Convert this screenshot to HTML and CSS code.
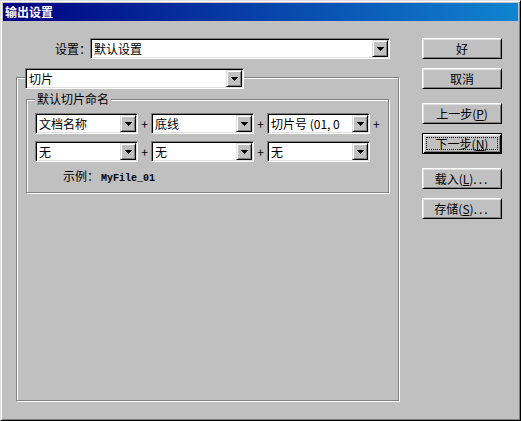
FILE: index.html
```html
<!DOCTYPE html>
<html lang="zh-CN">
<head>
    <meta charset="UTF-8">
    <title>输出设置</title>
    <link rel="stylesheet" href="styles.css">
</head>
<body>

<div class="window">
    <div class="titlebar">输出设置</div>

    <div class="dialog">
        <div class="main">
            <!-- 设置 -->
            <div class="setting-row">
                <span class="setting-label">设置：</span>
                <div class="combo combo-wide">
                    <span class="combo-text">默认设置</span>
                    <span class="combo-btn"><svg width="7" height="4" viewBox="0 0 7 4"><path d="M0 0h7v1H0zM1 1h5v1H1zM2 2h3v1H2zM3 3h1v1H3z"/></svg></span>
                </div>
            </div>

            <!-- 切片 -->
            <div class="group">
                <div class="combo combo-slice">
                    <span class="combo-text">切片</span>
                    <span class="combo-btn"><svg width="7" height="4" viewBox="0 0 7 4"><path d="M0 0h7v1H0zM1 1h5v1H1zM2 2h3v1H2zM3 3h1v1H3z"/></svg></span>
                </div>

                <div class="subgroup">
                    <div class="subgroup-title">默认切片命名</div>

                    <div class="name-row">
                        <div class="combo">
                            <span class="combo-text">文档名称</span>
                            <span class="combo-btn"><svg width="7" height="4" viewBox="0 0 7 4"><path d="M0 0h7v1H0zM1 1h5v1H1zM2 2h3v1H2zM3 3h1v1H3z"/></svg></span>
                        </div>
                        <span class="plus">+</span>
                        <div class="combo">
                            <span class="combo-text">底线</span>
                            <span class="combo-btn"><svg width="7" height="4" viewBox="0 0 7 4"><path d="M0 0h7v1H0zM1 1h5v1H1zM2 2h3v1H2zM3 3h1v1H3z"/></svg></span>
                        </div>
                        <span class="plus">+</span>
                        <div class="combo">
                            <span class="combo-text">切片号 (01, 0</span>
                            <span class="combo-btn"><svg width="7" height="4" viewBox="0 0 7 4"><path d="M0 0h7v1H0zM1 1h5v1H1zM2 2h3v1H2zM3 3h1v1H3z"/></svg></span>
                        </div>
                        <span class="plus plus-end">+</span>
                    </div>

                    <div class="name-row">
                        <div class="combo">
                            <span class="combo-text">无</span>
                            <span class="combo-btn"><svg width="7" height="4" viewBox="0 0 7 4"><path d="M0 0h7v1H0zM1 1h5v1H1zM2 2h3v1H2zM3 3h1v1H3z"/></svg></span>
                        </div>
                        <span class="plus">+</span>
                        <div class="combo">
                            <span class="combo-text">无</span>
                            <span class="combo-btn"><svg width="7" height="4" viewBox="0 0 7 4"><path d="M0 0h7v1H0zM1 1h5v1H1zM2 2h3v1H2zM3 3h1v1H3z"/></svg></span>
                        </div>
                        <span class="plus">+</span>
                        <div class="combo">
                            <span class="combo-text">无</span>
                            <span class="combo-btn"><svg width="7" height="4" viewBox="0 0 7 4"><path d="M0 0h7v1H0zM1 1h5v1H1zM2 2h3v1H2zM3 3h1v1H3z"/></svg></span>
                        </div>
                    </div>

                    <div class="example">
                        <span>示例：</span><span class="example-value">MyFile_01</span>
                    </div>
                </div>
            </div>
        </div>

        <!-- 按钮 -->
        <div class="actions">
            <button class="btn">好</button>
            <button class="btn">取消</button>
            <button class="btn btn-sep">上一步(<u>P</u>)</button>
            <button class="btn btn-default"><span class="focus-ring">下一步(<u>N</u>)</span></button>
            <button class="btn btn-sep">载入(<u>L</u>)<span class="dots">...</span></button>
            <button class="btn">存储(<u>S</u>)<span class="dots">...</span></button>
        </div>
    </div>
</div>

</body>
</html>
```

FILE: styles.css
```css
body {
    margin: 0;
    font-family: "Noto Sans CJK SC", sans-serif;
    font-size: 12px;
    color: #000;
}
.window {
    width: 521px;
    height: 421px;
    box-sizing: border-box;
    background: #c0c0c0;
    border: 1px solid;
    border-color: #dfdfdf #000 #000 #dfdfdf;
    box-shadow: inset 1px 1px #fff, inset -1px -1px #808080;
    padding: 2px;
}
.titlebar {
    height: 18px;
    line-height: 18px;
    padding-left: 2px;
    background: linear-gradient(to right, #000080, #1084d0);
    color: #fff;
    font-weight: bold;
}
.dialog {
    display: flex;
    padding: 17px 0 0 13px;
}
.main {
    width: 383px;
}
.setting-row {
    display: flex;
    align-items: center;
    height: 21px;
    padding-left: 39px;
}
.setting-label {
    width: 35px;
    white-space: nowrap;
}

/* combo box */
.combo {
    display: flex;
    flex-shrink: 0;
    box-sizing: border-box;
    width: 103px;
    height: 21px;
    padding: 1px;
    background: #fff;
    border: 1px solid;
    border-color: #808080 #fff #fff #808080;
    box-shadow: inset 1px 1px #000, inset -1px -1px #dfdfdf;
}
.combo-wide {
    width: 300px;
}
.combo-slice {
    width: 219px;
    margin: -10px 0 0 8px;
}
.combo-text {
    flex: 1;
    min-width: 0;
    padding-left: 2px;
    line-height: 17px;
    overflow: hidden;
    white-space: pre;
}
.combo-btn {
    display: flex;
    align-items: center;
    justify-content: center;
    box-sizing: border-box;
    width: 16px;
    height: 17px;
    flex-shrink: 0;
    background: #c0c0c0;
    border: 1px solid;
    border-color: #dfdfdf #000 #000 #dfdfdf;
    box-shadow: inset 1px 1px #fff, inset -1px -1px #808080;
}
.combo-btn svg {
    display: block;
    shape-rendering: crispEdges;
}

/* group boxes */
.group {
    margin-top: 18px;
    height: 324px;
    box-sizing: border-box;
    border: 1px solid #808080;
    box-shadow: inset 1px 1px #fff, 1px 1px #fff;
}
.subgroup {
    margin: 10px 0 0 9px;
    width: 363px;
    height: 94px;
    box-sizing: border-box;
    padding-left: 8px;
    border: 1px solid #808080;
    box-shadow: inset 1px 1px #fff, 1px 1px #fff;
}
.subgroup-title {
    width: fit-content;
    margin-top: -8px;
    padding: 0 2px;
    line-height: 14px;
    background: #c0c0c0;
}
.name-row {
    display: flex;
    align-items: center;
    margin-top: 7px;
}
.plus {
    flex-shrink: 0;
    width: 13px;
    text-align: center;
}
.plus-end {
    width: auto;
    margin-left: 3px;
}
.example {
    margin-top: 7px;
    padding-left: 28px;
    line-height: 14px;
}
.example-value {
    margin-left: 2px;
    font-family: "Liberation Mono", monospace;
    font-size: 10px;
    font-weight: bold;
}

/* buttons */
.actions {
    display: flex;
    flex-direction: column;
    width: 80px;
    margin-left: 23px;
}
.btn {
    box-sizing: border-box;
    width: 80px;
    height: 21px;
    padding: 0;
    font: inherit;
    color: #000;
    background: #c0c0c0;
    border: 1px solid;
    border-color: #fff #000 #000 #fff;
    box-shadow: inset 1px 1px #dfdfdf, inset -1px -1px #808080;
}
.btn + .btn {
    margin-top: 9px;
}
.btn + .btn-sep {
    margin-top: 14px;
}
.btn-default {
    padding: 3px;
    border-color: #000;
    box-shadow: inset 1px 1px #fff, inset -1px -1px #000, inset 2px 2px #dfdfdf, inset -2px -2px #808080;
}
.focus-ring {
    display: flex;
    align-items: center;
    justify-content: center;
    box-sizing: border-box;
    height: 100%;
    border: 1px dotted #000;
}
.dots {
    letter-spacing: 2px;
}
```
